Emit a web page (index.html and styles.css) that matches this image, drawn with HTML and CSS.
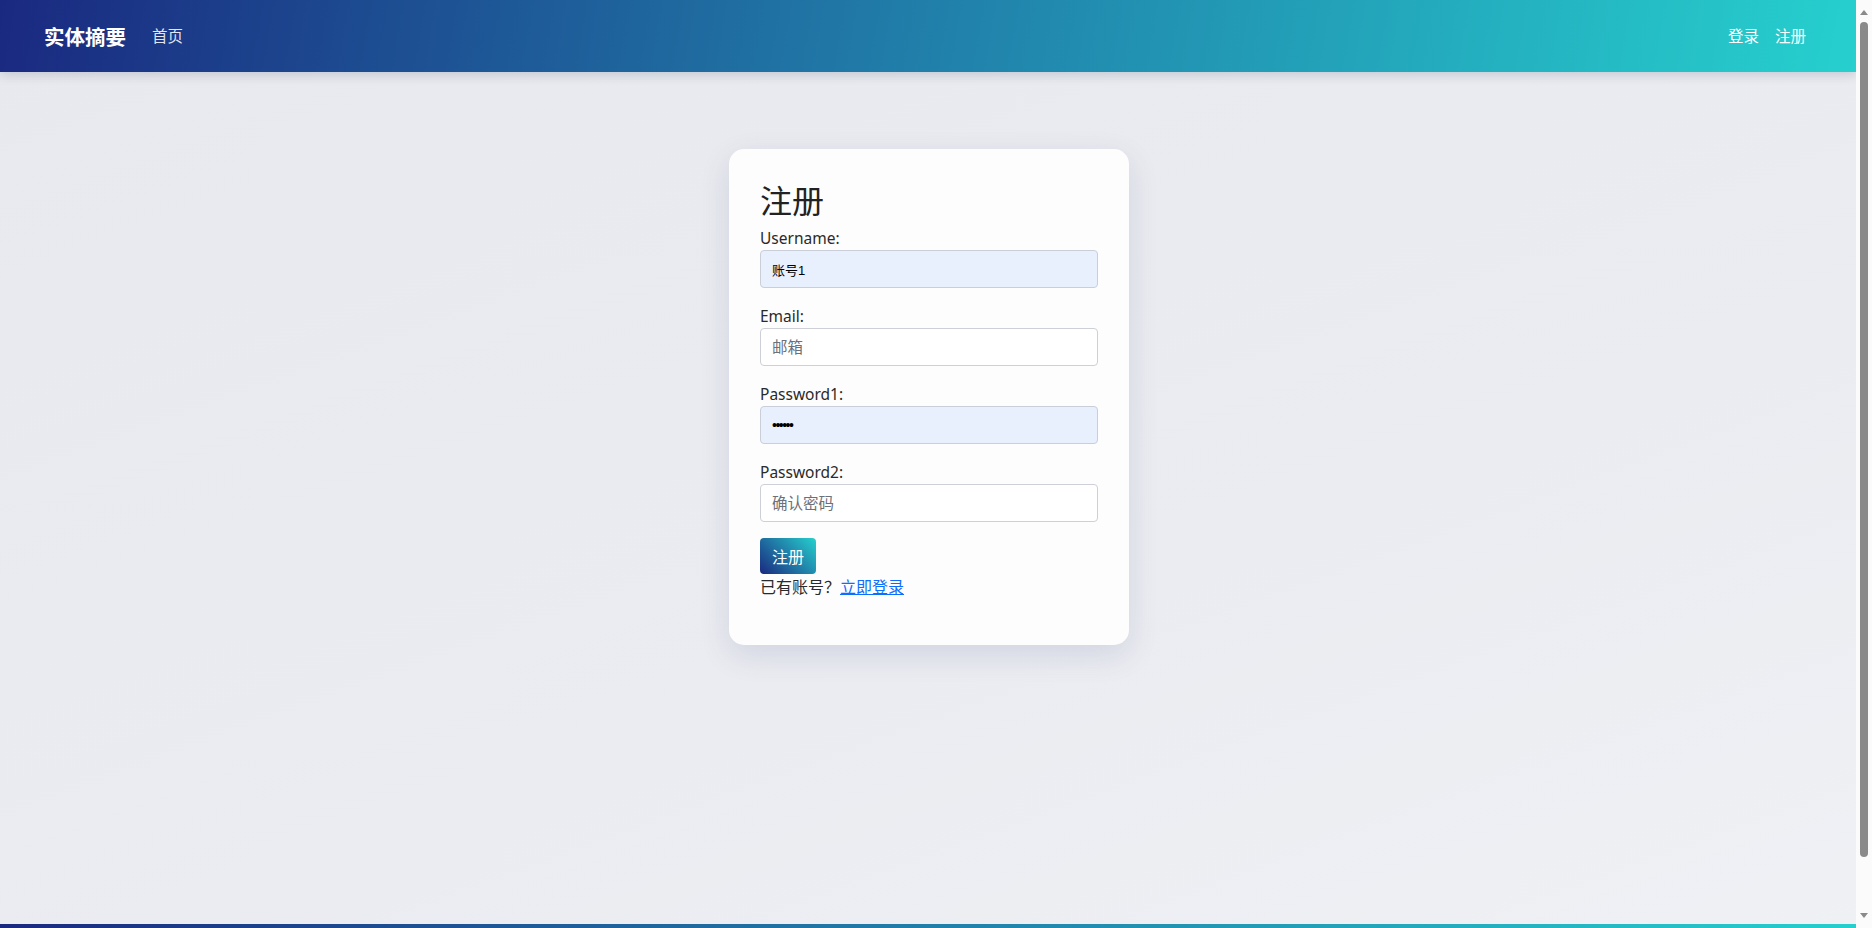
FILE: index.html
```html
<!DOCTYPE html>
<html lang="zh-CN">
<head>
<meta charset="utf-8">
<title>注册 - 实体摘要</title>
<link rel="stylesheet" href="styles.css">
</head>
<body>
<nav class="navbar">
  <div class="nav-left">
    <a class="brand" href="#">实体摘要</a>
    <a class="nav-link" href="#">首页</a>
  </div>
  <div class="nav-right">
    <a class="nav-link bright" href="#">登录</a>
    <a class="nav-link bright" href="#">注册</a>
  </div>
</nav>
<main class="main">
  <div class="card">
    <h2 class="title">注册</h2>
    <form class="form">
      <div class="field">
        <label class="label" for="u">Username:</label>
        <input class="input autofill small" id="u" type="text" value="账号1">
      </div>
      <div class="field">
        <label class="label" for="e">Email:</label>
        <input class="input" id="e" type="email" placeholder="邮箱">
      </div>
      <div class="field">
        <label class="label" for="p1">Password1:</label>
        <input class="input autofill dots" id="p1" type="password" value="123456">
      </div>
      <div class="field">
        <label class="label" for="p2">Password2:</label>
        <input class="input" id="p2" type="password" placeholder="确认密码">
      </div>
      <button class="btn" type="button">注册</button>
    </form>
    <p class="hint">已有账号？<a class="link" href="#">立即登录</a></p>
  </div>
</main>
<footer class="footer"></footer>
<div class="scrollbar" aria-hidden="true">
  <span class="arrow up"></span>
  <span class="thumb"></span>
  <span class="arrow down"></span>
</div>
</body>
</html>
```
FILE: styles.css
```css
* { box-sizing: border-box; }
html, body { margin: 0; padding: 0; }
body {
  font-family: "Noto Sans", "Noto Sans CJK SC", sans-serif;
  font-size: 16px;
  line-height: 1.5;
  color: #212529;
  padding-right: 16px;
  background: linear-gradient(160deg, #e8e9ee 0%, #ebecf1 60%, #f0f1f5 100%);
}
.navbar {
  height: 72px;
  display: flex;
  align-items: center;
  justify-content: space-between;
  padding: 0 42px 0 44px;
  background: linear-gradient(100deg, #1a2980 0%, #2077a6 45%, #26d0ce 100%);
  box-shadow: 0 3px 10px rgba(40, 50, 90, 0.18);
  position: relative;
  z-index: 2;
}
.nav-left, .nav-right { display: flex; align-items: center; }
.brand {
  font-family: "Noto Sans CJK SC", sans-serif;
  font-size: 20.5px;
  font-weight: 700;
  color: #fff;
  text-decoration: none;
  margin-right: 18px;
}
.nav-link {
  font-family: "Noto Sans CJK SC", sans-serif;
  font-size: 15.5px;
  color: rgba(255, 255, 255, 0.88);
  text-decoration: none;
  padding: 8px;
}
.nav-link.bright { color: #fff; }
.main {
  min-height: 852px;
  display: flex;
  justify-content: center;
  align-items: flex-start;
  padding-top: 77px;
}
.card {
  width: 400px;
  margin-left: 2px;
  background: #fdfdfd;
  border-radius: 15px;
  padding: 31px;
  box-shadow: 0 10px 30px rgba(60, 70, 130, 0.14);
}
.title {
  font-family: "Noto Sans CJK SC", sans-serif;
  font-weight: 400;
  font-size: 32px;
  line-height: 38px;
  margin: 0 0 8px;
  color: #222;
}
.field { margin-bottom: 16px; }
.label {
  display: block;
  font-size: 15.5px;
  line-height: 24px;
  color: #2a2a2a;
}
.input {
  display: block;
  width: 100%;
  height: 38px;
  padding: 6px 11px;
  font-family: "Noto Sans", "Noto Sans CJK SC", sans-serif;
  font-size: 15.5px;
  color: #212529;
  background: #fff;
  border: 1px solid #ced0d8;
  border-radius: 4px;
  outline: none;
}
.input::placeholder { color: #6c7079; }
.input.autofill { background: #e8f0fe; border-color: #c9ced8; }
.input.small { font-family: "Liberation Sans", "Noto Sans CJK SC", sans-serif; font-size: 13px; color: #000; }
.input.dots { font-family: "Liberation Sans", sans-serif; font-size: 14px; color: #000; letter-spacing: -1.5px; }
.btn {
  display: block;
  height: 36px;
  padding: 0 12px;
  border: 0;
  border-radius: 4px;
  font-family: "Noto Sans CJK SC", sans-serif;
  font-size: 16px;
  color: #fff;
  background: linear-gradient(45deg, #1a2980 0%, #26d0ce 100%);
  cursor: pointer;
}
.hint {
  margin: 0 0 16px;
  font-family: "Noto Sans CJK SC", sans-serif;
  font-size: 16px;
  line-height: 24px;
  color: #2a2a2a;
}
.link { color: #0d6efd; text-decoration: underline; }
.footer {
  height: 64px;
  background: linear-gradient(100deg, #1a2980 0%, #2077a6 45%, #26d0ce 100%);
}
.scrollbar {
  position: fixed;
  top: 0;
  right: 0;
  width: 16px;
  height: 100vh;
  background: #fbfbfb;
  z-index: 10;
}
.arrow {
  position: absolute;
  left: 4px;
  width: 0;
  height: 0;
  border-left: 4px solid transparent;
  border-right: 4px solid transparent;
}
.arrow.up { top: 10px; border-bottom: 5px solid #8a8a8a; }
.arrow.down { bottom: 10px; border-top: 5px solid #8a8a8a; }
.thumb {
  position: absolute;
  left: 4px;
  top: 22px;
  width: 8px;
  height: 835px;
  border-radius: 4px;
  background: #8a8a8a;
}
```
